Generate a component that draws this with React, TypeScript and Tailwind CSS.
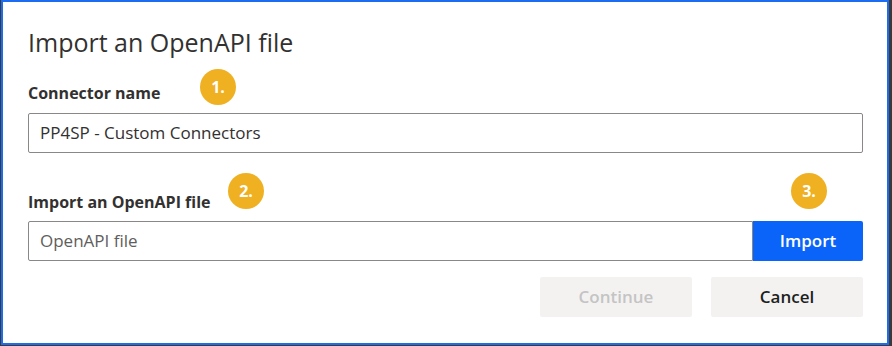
import React from "react";

function Badge({ n, className }: { n: string; className: string }) {
  return (
    <span
      className={
        "absolute flex h-9 w-9 items-center justify-center rounded-full bg-[#efb022] text-[16px] font-bold text-white " +
        className
      }
    >
      {n}
    </span>
  );
}

export default function App() {
  return (
    <div
      className="h-[346px] w-[892px] bg-[#3a3a3a] pb-px pl-px pr-[3px]"
      style={{ fontFamily: '"Open Sans", "Noto Sans", sans-serif' }}
    >
      <div className="relative flex h-full flex-col border-2 border-[#1b6cf0] bg-white pl-[25px] pr-[24px] text-[#323130]">
        <h1 className="mt-[24px] text-[25px] font-normal leading-[32px]">Import an OpenAPI file</h1>

        <div className="relative mt-[25px]">
          <label className="block text-[16px] font-bold leading-[20px]">Connector name</label>
          <Badge n="1." className="left-[172px] top-[-14px]" />
        </div>
        <div className="mt-[10px] flex h-10 items-center rounded-[2px] border border-[#8a8886] px-[11px] text-[17px]">
          PP4SP - Custom Connectors
        </div>

        <div className="relative mt-[39px]">
          <label className="block text-[16px] font-bold leading-[20px]">Import an OpenAPI file</label>
          <Badge n="2." className="left-[200px] top-[-19px]" />
          <Badge n="3." className="left-[763px] top-[-19px]" />
        </div>
        <div className="mt-[9px] flex h-10">
          <div className="flex flex-1 items-center rounded-l-[2px] border border-[#8a8886] px-[11px] text-[17px] text-[#605e5c]">
            OpenAPI file
          </div>
          <button className="w-[110px] rounded-r-[2px] bg-[#0a64fa] text-[17px] font-semibold text-white">
            Import
          </button>
        </div>

        <div className="mt-4 flex justify-end gap-[19px]">
          <button className="h-10 w-[152px] rounded-[2px] bg-[#f3f2f1] text-[17px] font-semibold text-[#c4c4c4]">
            Continue
          </button>
          <button className="h-10 w-[152px] rounded-[2px] bg-[#f3f2f1] text-[17px] font-semibold text-[#201f1e]">
            Cancel
          </button>
        </div>
      </div>
    </div>
  );
}
